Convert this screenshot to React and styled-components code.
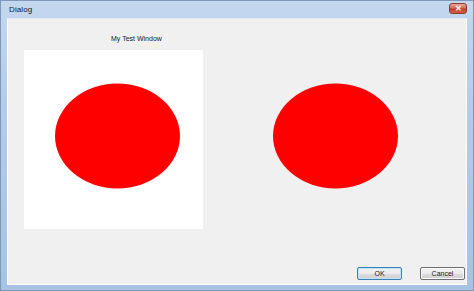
import React from 'react';
import styled, { createGlobalStyle } from 'styled-components';

const GlobalStyle = createGlobalStyle`
    html, body {
        margin: 0;
        padding: 0;
        width: 474px;
        height: 291px;
        overflow: hidden;
        background: #ffffff;
        font-family: 'Liberation Sans', Arial, sans-serif;
    }
`;

const Window = styled.div`
    width: 474px;
    height: 291px;
    box-sizing: border-box;
    display: flex;
    flex-direction: column;
    background: linear-gradient(to bottom, #c3d8ef 0%, #b2cbe8 40%, #a6c3e4 100%);
    border: 1px solid #7f98b8;
    padding: 0 6px 5px 6px;
`;

const TitleBar = styled.div`
    height: 17px;
    display: flex;
    align-items: center;
    justify-content: space-between;
    padding-left: 2px;
`;

const Title = styled.span`
    font-size: 8px;
    color: #0f1a2c;
    letter-spacing: 0.1px;
`;

const CloseButton = styled.div`
    width: 18px;
    height: 11px;
    margin-top: -2px;
    box-sizing: border-box;
    border: 1px solid #8a3a30;
    border-radius: 3px;
    background: linear-gradient(to bottom, #e9a89b 0%, #d86a58 45%, #c23a28 55%, #d7614a 100%);
    display: flex;
    align-items: center;
    justify-content: center;
    color: #ffffff;
    font-size: 8px;
    font-weight: bold;
    line-height: 1;
`;

const Content = styled.div`
    flex: 1;
    display: flex;
    flex-direction: column;
    background: #f0f0f0;
    border: 1px solid #ffffff;
    border-top-color: #e4ebf3;
    padding: 16px 0 4px 16px;
`;

const CanvasRow = styled.div`
    display: flex;
    gap: 39px;
`;

const Column = styled.div`
    display: flex;
    flex-direction: column;
`;

const Caption = styled.div`
    font-size: 7px;
    color: #1a1a1a;
    padding-left: 87px;
    height: 15px;
`;

const Canvas = styled.div`
    width: 179px;
    height: 179px;
    background: ${p => (p.$filled ? '#ffffff' : 'transparent')};
`;

const Spacer = styled.div`
    height: 15px;
`;

const ButtonRow = styled.div`
    margin-top: auto;
    display: flex;
    justify-content: flex-end;
    gap: 18px;
    padding-right: 1px;
`;

const Button = styled.button`
    width: 45px;
    height: 13px;
    padding: 0;
    box-sizing: border-box;
    font-family: 'Liberation Sans', Arial, sans-serif;
    font-size: 7px;
    color: #1a1a1a;
    border-radius: 2px;
    border: 1px solid ${p => (p.$primary ? '#3c7fb1' : '#707070')};
    background: linear-gradient(to bottom, #f2f2f2 0%, #ebebeb 50%, #dddddd 51%, #cfcfcf 100%);
    box-shadow: inset 0 0 0 1px ${p => (p.$primary ? '#bfe3f8' : '#fafafa')};
`;

function Ellipse() {
    return (
        <svg width="179" height="179" viewBox="0 0 179 179">
            <ellipse cx="93.5" cy="86" rx="62.5" ry="52.5" fill="#ff0000" />
        </svg>
    );
}

export default function App() {
    return (
        <>
            <GlobalStyle />
            <Window>
                <TitleBar>
                    <Title>Dialog</Title>
                    <CloseButton>✕</CloseButton>
                </TitleBar>
                <Content>
                    <CanvasRow>
                        <Column>
                            <Caption>My Test Window</Caption>
                            <Canvas $filled>
                                <Ellipse />
                            </Canvas>
                        </Column>
                        <Column>
                            <Spacer />
                            <Canvas>
                                <Ellipse />
                            </Canvas>
                        </Column>
                    </CanvasRow>
                    <ButtonRow>
                        <Button $primary>OK</Button>
                        <Button>Cancel</Button>
                    </ButtonRow>
                </Content>
            </Window>
        </>
    );
}
